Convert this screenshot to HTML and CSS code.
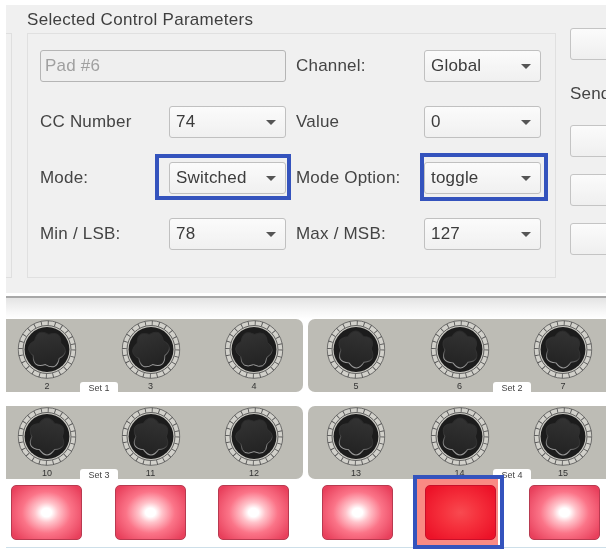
FILE: index.html
```html
<!DOCTYPE html>
<html lang="en">
<head>
<meta charset="utf-8">
<title>Selected Control Parameters</title>
<link rel="stylesheet" href="styles.css">
</head>
<body>
<svg class="defs" width="0" height="0" aria-hidden="true">
  <defs>
    <linearGradient id="lobeFill" x1="0" y1="0" x2="0.3" y2="1">
      <stop offset="0" stop-color="#343434"/>
      <stop offset="1" stop-color="#242424"/>
    </linearGradient>
    <linearGradient id="lobeEdge" x1="0" y1="0" x2="0.2" y2="1">
      <stop offset="0" stop-color="#2a2a2a"/>
      <stop offset="0.65" stop-color="#333"/>
      <stop offset="1" stop-color="#999"/>
    </linearGradient>
    <symbol id="ring" viewBox="-30 -30 60 60">
      <circle r="29.3" fill="#d2d1cb" stroke="#555" stroke-width=".8"/>
      <circle r="27" fill="none" stroke="#555" stroke-width="4.6" stroke-dasharray=".9 6.17"/>
      <circle r="24.4" fill="#c9c8c2" stroke="#444" stroke-width=".8"/>
      <circle r="22.8" fill="#1c1c1c"/>
    </symbol>
    <path id="lobes" d="M13.3 -7.7Q24.2 0 13.3 7.7Q12.1 20.9 0 15.4Q-12.1 20.9 -13.3 7.7Q-24.2 0 -13.3 -7.7Q-12.1 -20.9 0 -15.4Q12.1 -20.9 13.3 -7.7Z" fill="url(#lobeFill)" stroke="url(#lobeEdge)" stroke-width="1"/>
  </defs>
</svg>
<div class="page">
  <section class="panel">
    <div class="stub"></div>
    <div class="params">
      <h1 class="title">Selected Control Parameters</h1>
      <div class="group">
        <div class="field">Pad #6</div>
        <div class="label mid">Channel:</div>
        <div class="sel">Global<i class="arrow"></i></div>

        <div class="label">CC Number</div>
        <div class="sel">74<i class="arrow"></i></div>
        <div class="label mid">Value</div>
        <div class="sel">0<i class="arrow"></i></div>

        <div class="label">Mode:</div>
        <div class="sel hl-a">Switched<i class="arrow"></i></div>
        <div class="label mid">Mode Option:</div>
        <div class="sel hl-b">toggle<i class="arrow"></i></div>

        <div class="label">Min / LSB:</div>
        <div class="sel">78<i class="arrow"></i></div>
        <div class="label mid">Max / MSB:</div>
        <div class="sel">127<i class="arrow"></i></div>
      </div>
    </div>
    <div class="side">
      <div class="btn"></div>
      <div class="send">Send</div>
      <div class="btn"></div>
      <div class="btn"></div>
      <div class="btn"></div>
    </div>
  </section>
  <div class="shade"></div>
  <div class="deck">
    <div class="bank left">
      <div class="knob"><svg viewBox="-30 -30 60 60"><use href="#ring" x="-30" y="-30" width="60" height="60"/><use href="#lobes" transform="rotate(6)"/></svg><span>2</span></div>
      <div class="knob"><svg viewBox="-30 -30 60 60"><use href="#ring" x="-30" y="-30" width="60" height="60"/><use href="#lobes" transform="rotate(-6)"/></svg><span>3</span></div>
      <div class="knob"><svg viewBox="-30 -30 60 60"><use href="#ring" x="-30" y="-30" width="60" height="60"/><use href="#lobes" transform="rotate(2)"/></svg><span>4</span></div>
      <div class="tab t-left">Set 1</div>
    </div>
    <div class="bank right">
      <div class="knob"><svg viewBox="-30 -30 60 60"><use href="#ring" x="-30" y="-30" width="60" height="60"/><use href="#lobes" transform="rotate(28)"/></svg><span>5</span></div>
      <div class="knob"><svg viewBox="-30 -30 60 60"><use href="#ring" x="-30" y="-30" width="60" height="60"/><use href="#lobes" transform="rotate(28)"/></svg><span>6</span></div>
      <div class="knob"><svg viewBox="-30 -30 60 60"><use href="#ring" x="-30" y="-30" width="60" height="60"/><use href="#lobes" transform="rotate(28)"/></svg><span>7</span></div>
      <div class="tab t-right">Set 2</div>
    </div>
    <div class="bank left">
      <div class="knob"><svg viewBox="-30 -30 60 60"><use href="#ring" x="-30" y="-30" width="60" height="60"/><use href="#lobes" transform="rotate(30)"/></svg><span>10</span></div>
      <div class="knob"><svg viewBox="-30 -30 60 60"><use href="#ring" x="-30" y="-30" width="60" height="60"/><use href="#lobes" transform="rotate(30)"/></svg><span>11</span></div>
      <div class="knob"><svg viewBox="-30 -30 60 60"><use href="#ring" x="-30" y="-30" width="60" height="60"/><use href="#lobes" transform="rotate(0)"/></svg><span>12</span></div>
      <div class="tab t-left">Set 3</div>
    </div>
    <div class="bank right">
      <div class="knob"><svg viewBox="-30 -30 60 60"><use href="#ring" x="-30" y="-30" width="60" height="60"/><use href="#lobes" transform="rotate(30)"/></svg><span>13</span></div>
      <div class="knob"><svg viewBox="-30 -30 60 60"><use href="#ring" x="-30" y="-30" width="60" height="60"/><use href="#lobes" transform="rotate(30)"/></svg><span>14</span></div>
      <div class="knob"><svg viewBox="-30 -30 60 60"><use href="#ring" x="-30" y="-30" width="60" height="60"/><use href="#lobes" transform="rotate(30)"/></svg><span>15</span></div>
      <div class="tab t-right">Set 4</div>
    </div>
  </div>
  <div class="pads">
    <div class="pad"></div>
    <div class="pad"></div>
    <div class="pad"></div>
    <div class="pad"></div>
    <div class="pad active"></div>
    <div class="pad"></div>
  </div>
  <div class="rule"></div>
</div>
</body>
</html>
```
FILE: styles.css
```css
* { box-sizing: border-box; }
html, body { margin: 0; padding: 0; background: #fff; }
.defs { position: absolute; }
.page {
  width: 613px;
  height: 554px;
  overflow: hidden;
  background: #fff;
  padding: 5px 7px 0 6px;
  font-family: "Liberation Sans", Arial, sans-serif;
  letter-spacing: .2px;
  color: #3a3a3a;
  filter: blur(.4px);
}

/* top dialog */
.panel {
  display: flex;
  height: 288px;
  background: #f0f0f0;
  overflow: hidden;
}
.stub {
  flex: none;
  width: 6px;
  height: 245px;
  margin-top: 28px;
  border: 1px solid #dfdfdf;
  border-left: 0;
}
.params { flex: none; width: 529px; margin-left: 15px; }
.title {
  margin: 0;
  height: 28px;
  font-size: 17px;
  font-weight: 400;
  letter-spacing: .3px;
  line-height: 30px;
  color: #3f3f3f;
}
.group {
  display: grid;
  grid-template-columns: 129px 117px 138px 117px;
  grid-auto-rows: 32px;
  row-gap: 24px;
  height: 245px;
  padding: 16px 0 0 12px;
  border: 1px solid #e0e0e0;
}
.label { font-size: 17px; line-height: 32px; color: #444; }
.label.mid { margin-left: 10px; }
.field {
  grid-column: span 2;
  border: 1px solid #b5b5b5;
  border-radius: 3px;
  padding-left: 4px;
  font-size: 17px;
  line-height: 29px;
  color: #a0a0a0;
  background: #efefef;
}
.sel {
  position: relative;
  border: 1px solid #c0c0c0;
  border-radius: 3px;
  padding-left: 6px;
  font-size: 17px;
  line-height: 30px;
  color: #3c3c3c;
  background: linear-gradient(#fbfbfb, #f0f0f0);
}
.arrow {
  position: absolute;
  right: 9px;
  top: 13px;
  width: 0;
  height: 0;
  border: 5px solid transparent;
  border-top: 5px solid #555;
  border-bottom: 0;
}
.hl-a::after, .hl-b::after {
  content: "";
  position: absolute;
  border: 4px solid #3453bd;
}
.hl-a::after { left: -15px; right: -6px; top: -9px; bottom: -7px; }
.hl-b::after { left: -5px; right: -8px; top: -10px; bottom: -8px; }

.side { margin-left: 14px; width: 80px; flex: none; }
.btn {
  width: 80px;
  height: 32px;
  margin-bottom: 17px;
  border: 1px solid #c4c4c4;
  border-radius: 3px;
  background: linear-gradient(#fbfbfb, #efefef);
}
.btn:first-child { margin-top: 23px; margin-bottom: 0; }
.send { height: 65px; padding-top: 25px; font-size: 17px; line-height: 18px; color: #444; }

/* controller picture */
.shade {
  height: 23px;
  margin-top: 3px;
  border-top: 2px solid #a8a8a8;
  background: linear-gradient(#e4e4e4, #f8f8f8 70%, #fff);
}
.deck {
  display: grid;
  grid-template-columns: 297px 298px;
  column-gap: 5px;
  grid-auto-rows: 73px;
  row-gap: 14px;
}
.bank {
  position: relative;
  display: flex;
  gap: 43.5px;
  padding-top: 1px;
  background: #bdbcb5;
  border-radius: 7px;
  letter-spacing: 0;
}
.bank.left { padding-left: 11px; border-radius: 0 7px 7px 0; }
.bank.right { padding-left: 18px; border-radius: 7px 0 0 7px; }
.knob { width: 60px; display: flex; flex-direction: column; align-items: center; }
.knob svg { display: block; width: 60px; height: 60px; }
.knob span {
  margin-top: 1px;
  font-size: 9px;
  line-height: 12px;
  color: #333;
}
.tab {
  position: absolute;
  bottom: 0;
  width: 38px;
  height: 10px;
  background: #fff;
  border-radius: 3px 3px 0 0;
  font-size: 9px;
  line-height: 12px;
  text-align: center;
  color: #444;
}
.t-left { left: 74px; }
.t-right { left: 185px; }

.pads {
  position: relative;
  isolation: isolate;
  display: flex;
  margin-top: 6px;
  padding-left: 5px;
  gap: 32.5px;
}
.pad {
  width: 71px;
  height: 55px;
  border: 1px solid #b83a50;
  border-radius: 5px;
  background: radial-gradient(ellipse 42px 36px at 50% 50%, #fff 12%, #ffc4cb 28%, #fb7488 58%, #e8405c 100%);
}
.pad.active {
  position: relative;
  border-color: #c8102a;
  background: radial-gradient(ellipse 42px 34px at 50% 50%, #f84a50 0%, #f5303c 45%, #ec1228 100%);
}
.pad.active::before {
  content: "";
  position: absolute;
  left: -10px;
  right: -3px;
  top: -8px;
  bottom: -8px;
  z-index: -1;
  background: #f98a84;
}
.pad.active::after {
  content: "";
  position: absolute;
  left: -13px;
  right: -9px;
  top: -11px;
  bottom: -10px;
  border: 4px solid #3453bd;
}
.rule { height: 1px; margin-top: 7px; background: #cddfe9; }
```
